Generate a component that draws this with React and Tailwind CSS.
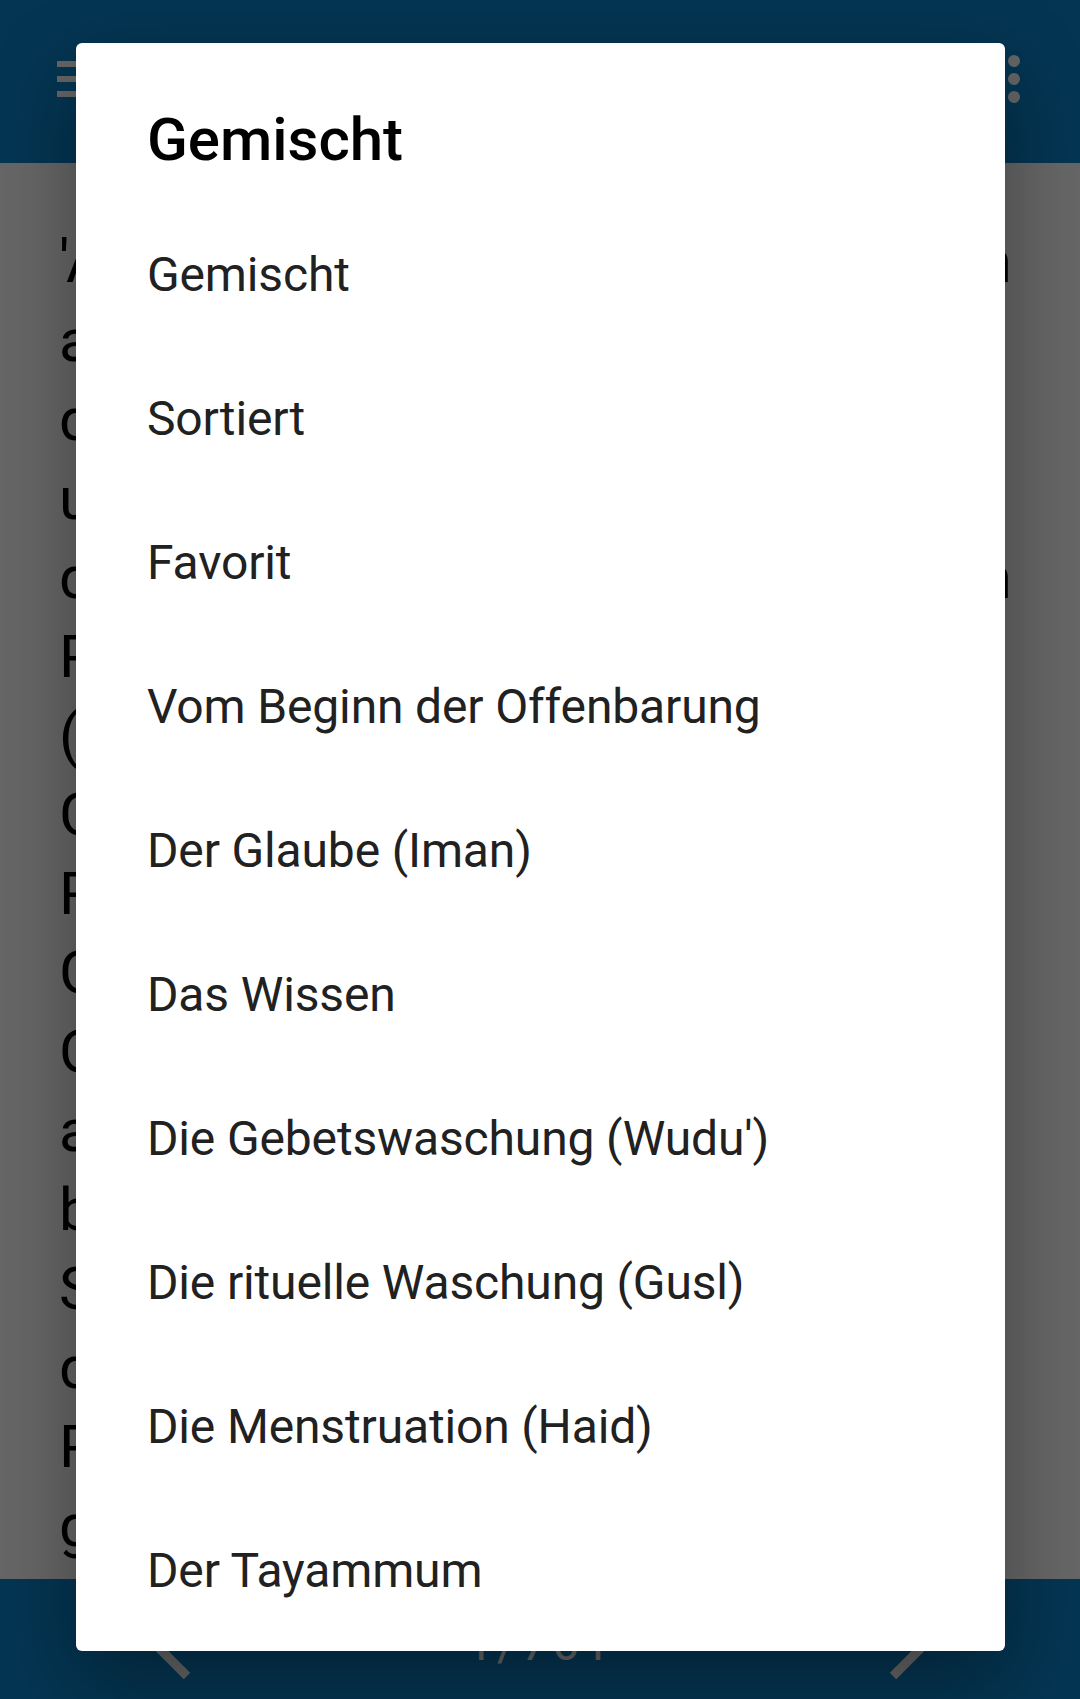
import React from "react";

const options = [
  "Gemischt",
  "Sortiert",
  "Favorit",
  "Vom Beginn der Offenbarung",
  "Der Glaube (Iman)",
  "Das Wissen",
  "Die Gebetswaschung (Wudu')",
  "Die rituelle Waschung (Gusl)",
  "Die Menstruation (Haid)",
  "Der Tayammum",
  "Das Gebet",
];

// background text lines, only the edges peek out from behind the dialog
const lines = [
  ["'Aischa, Mutter der", "Harith ibn"],
  ["al-Mughira, Allahs Wohl"],
  ["den Gesandten Allahs"],
  ["und sagte: O Gesandter"],
  ["doch wie kommt sie zu", "ihn"],
  ["Prophet antwortete:"],
  ["(Manchmal kommt sie"],
  ["Glockenläuten gleich"],
  ["Richtung mir, und"],
  ["Gefährlichste für mich"],
  ["Offenbarung endet"],
  ["als ich sie behalten"],
  ["bereits verinnerlicht"],
  ["Sie war schwer und"],
  ["dann spricht der Engel"],
  ["Prophet, Allahs Segen"],
  ["gesehen habe ich"],
];

function TopBar() {
  return (
    <div className="h-[163px] shrink-0 bg-[#0a86cc] flex items-start justify-between pl-[57px] pr-[60px] pt-[61px]">
      <div className="flex flex-col gap-[9px]">
        <div className="w-[54px] h-[6px] bg-white" />
        <div className="w-[54px] h-[6px] bg-white" />
        <div className="w-[54px] h-[6px] bg-white" />
      </div>
      <div className="flex flex-col gap-[6px] -mt-[6px]">
        <div className="w-[12px] h-[12px] rounded-full bg-white" />
        <div className="w-[12px] h-[12px] rounded-full bg-white" />
        <div className="w-[12px] h-[12px] rounded-full bg-white" />
      </div>
    </div>
  );
}

function BottomBar() {
  return (
    <div className="h-[120px] shrink-0 bg-[#0a86cc] flex items-center justify-between px-[140px]">
      <svg width="60" height="86" viewBox="0 0 60 86">
        <polyline points="47,6 10,43 47,80" fill="none" stroke="white" strokeWidth="9" />
      </svg>
      <span className="text-[48px] leading-none tracking-[4px] text-white mt-[10px]">1/761</span>
      <svg width="60" height="86" viewBox="0 0 60 86">
        <polyline points="13,6 50,43 13,80" fill="none" stroke="white" strokeWidth="9" />
      </svg>
    </div>
  );
}

export default function App() {
  return (
    <div className="relative w-[1080px] h-[1699px] overflow-hidden font-['Roboto',sans-serif] flex flex-col bg-white">
      <TopBar />
      <div className="flex-1 pt-[59px] pl-[59px] pr-[68px] text-black text-[60px] leading-[79px] overflow-hidden">
        {lines.map((l, i) => (
          <div key={i} className="flex justify-between whitespace-nowrap overflow-hidden">
            <span>{l[0]}</span>
            {l[1] && <span>{l[1]}</span>}
          </div>
        ))}
      </div>
      <BottomBar />

      {/* dimmed overlay + dialog */}
      <div className="absolute inset-0 bg-black/60">
        <div className="absolute left-[76px] top-[43px] w-[929px] h-[1608px] bg-white rounded-[6px] overflow-hidden shadow-[0_30px_80px_rgba(0,0,0,0.35)]">
          <h2 className="pt-[61px] pl-[71px] text-[60px] leading-[72px] font-medium text-black">
            Gemischt
          </h2>
          <div className="mt-[27px]">
            {options.map((o) => (
              <div key={o} className="h-[144px] pl-[71px] text-[48px] leading-[144px] tracking-[-0.15px] text-[#212121] whitespace-nowrap">
                {o}
              </div>
            ))}
          </div>
        </div>
      </div>
    </div>
  );
}
